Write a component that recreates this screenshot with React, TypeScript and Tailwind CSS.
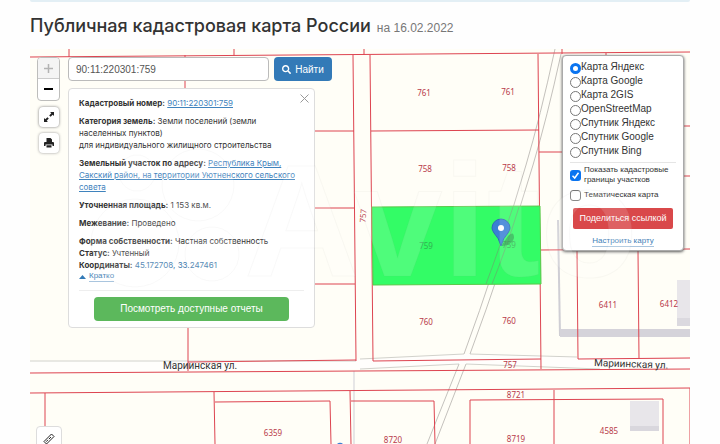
import { FaSearch, FaPrint } from "react-icons/fa";

const LINE = "#dd4450";

const layers = [
  "Карта Яндекс",
  "Карта Google",
  "Карта 2GIS",
  "OpenStreetMap",
  "Спутник Яндекс",
  "Спутник Google",
  "Спутник Bing",
];

// cadastral borders, as x1 y1 x2 y2
const borders = [
  [30, 57, 690, 52],
  [69, 49, 69, 57],
  [234, 49, 234, 56],
  [364, 49, 364, 55],
  [562, 49, 562, 54],
  [606, 53, 606, 58],
  [185, 55, 185, 95],
  [353, 55, 356, 361],
  [370, 55, 373, 361],
  [538, 54, 541, 369],
  [188, 320, 188, 371],
  [310, 131, 354, 131],
  [310, 208, 355, 208],
  [310, 284, 355, 284],
  [371, 131, 539, 130],
  [373, 361, 541, 359],
  [188, 362, 356, 360],
  [30, 373, 690, 369],
  [30, 393, 690, 388],
  [539, 152, 570, 152],
  [539, 250, 690, 249],
  [680, 126, 690, 126],
  [680, 176, 690, 176],
  [577, 250, 578, 359],
  [638, 250, 639, 359],
  [578, 359, 690, 358],
  [45, 393, 45, 444],
  [214, 392, 215, 444],
  [215, 402, 330, 401],
  [330, 401, 331, 444],
  [350, 391, 351, 444],
  [351, 401, 434, 401],
  [434, 401, 435, 444],
  [470, 400, 663, 399],
  [470, 400, 470, 444],
  [554, 390, 554, 444],
  [663, 399, 663, 444],
  [690, 388, 690, 444],
];

const plots = [
  { x: 424, y: 96, n: "761" },
  { x: 508, y: 95, n: "761" },
  { x: 425, y: 172, n: "758" },
  { x: 509, y: 171, n: "758" },
  { x: 426, y: 325, n: "760" },
  { x: 509, y: 324, n: "760" },
  { x: 510, y: 368, n: "757" },
  { x: 608, y: 308, n: "6411" },
  { x: 669, y: 307, n: "6412" },
  { x: 516, y: 398, n: "8721" },
  { x: 273, y: 436, n: "6359" },
  { x: 393, y: 443, n: "8720" },
  { x: 516, y: 442, n: "8719" },
  { x: 609, y: 434, n: "4585" },
];

function MapCanvas() {
  return (
    <svg
      className="absolute inset-0 h-full w-full"
      viewBox="30 49 660 395"
      preserveAspectRatio="xMidYMin slice"
      aria-hidden="true"
    >
      <rect x="30" y="49" width="660" height="395" fill="#fffef7" />
      {/* roads */}
      <path
        d="M30 361 L370 359 L464 354 L470 354 L577 357 L690 358 V369 L560 367 L466 364 L370 369 L30 373Z"
        fill="#fffefc"
      />
      <path d="M30 361H356M360 359L464 354M470 354L577 357M360 369L459 364M466 364L600 369" stroke="#d2d2cc" fill="none" />
      <path d="M354 371V444" stroke="#cfcfd6" strokeWidth="1" />
      <path
        d="M555 49Q540 118 526 165Q495 270 464 354M561 54Q547 118 533 165Q502 268 470 354M459 364L427 444M466 364L435 444"
        stroke="#c4c1bc"
        fill="none"
      />
      {/* buildings */}
      <path d="M558 220L560 336" stroke="#cfced4" strokeWidth="2" />
      <rect x="560" y="329" width="130" height="8" fill="#d5d3da" />
      <rect x="677" y="280" width="13" height="46" fill="#e8e6ea" />
      <rect x="677" y="318" width="13" height="8" fill="#dbd9df" />
      <rect x="630" y="401" width="29" height="30" fill="#e8e6ea" />
      <rect x="630" y="426" width="29" height="5" fill="#d9d7dd" />
      <g stroke={LINE} strokeWidth="1">
        {borders.map(([x1, y1, x2, y2]) => (
          <line key={`${x1}-${y1}-${x2}-${y2}`} x1={x1} y1={y1} x2={x2} y2={y2} />
        ))}
      </g>
      <g fill="#b83a4a" fontSize="8" textAnchor="middle" className="font-['Noto_Sans',sans-serif]">
        {plots.map((p) => (
          <text key={`${p.x}-${p.y}`} x={p.x} y={p.y}>
            {p.n}
          </text>
        ))}
        <text transform="translate(366 216) rotate(-86)">757</text>
      </g>
      <path d="M372 207L540 206L541 284L373 285Z" fill="#33fc66" stroke="#5cc84a" />
      <path d="M513 207Q498 252 486 284M519 207Q505 252 492 284" stroke="#56c46a" fill="none" />
      <g fill="#30b350" fontSize="8" textAnchor="middle" className="font-['Noto_Sans',sans-serif]">
        <text x="426" y="249">759</text>
        <text x="509" y="248">759</text>
      </g>
      <g fill="#333" fontSize="10" className="font-['Roboto',sans-serif]">
        <text x="163" y="369">Мариинская ул.</text>
        <text x="594" y="366" transform="rotate(2 594 366)">Мариинская ул.</text>
      </g>
      {/* marker */}
      <path d="M502 245L508 236Q514 230 514 238Q512 245 502 246Z" fill="#1f7a3c" opacity=".5" />
      <path
        d="M501 246Q499 238 494 233Q492 230 492 228A9 9 0 0 1 510 228Q510 230 508 233Q503 238 501 246Z"
        fill="#3a7fd5"
        stroke="#2f69b8"
      />
      <circle cx="501" cy="228" r="3" fill="#fff" />
      <path d="M337 444A4 4 0 0 1 343 444Z" fill="#3a7fd5" />
    </svg>
  );
}

function Watermark() {
  return (
    <svg
      className="pointer-events-none absolute inset-0 h-full w-full"
      viewBox="30 49 660 395"
      preserveAspectRatio="xMidYMin slice"
      aria-hidden="true"
    >
      <g fill="#fff" fillOpacity=".14" stroke="#888" strokeOpacity=".05">
        <circle cx="135" cy="243" r="44" />
        <circle cx="198" cy="185" r="36" />
        <circle cx="137" cy="173" r="18" />
        <circle cx="212" cy="254" r="27" />
        <text x="244" y="276" fontSize="160" fontWeight="700" className="font-['Liberation_Sans',sans-serif]">
          Avito
        </text>
      </g>
    </svg>
  );
}

function SideControls() {
  return (
    <div className="flex w-[23px] shrink-0 flex-col items-center gap-1.5">
      <div className="flex w-full flex-col overflow-hidden rounded-sm border border-[#bdbdbb] bg-white">
        <button type="button" aria-label="Приблизить" className="flex h-[21px] items-center justify-center border-b border-[#ccc] bg-[#f4f4f4]">
          <svg width="9" height="9" viewBox="0 0 9 9" stroke="#b3b3b3" strokeWidth="1.500">
            <path d="M4.500 0V9M0 4.500H9" />
          </svg>
        </button>
        <button type="button" aria-label="Отдалить" className="flex h-[21px] items-center justify-center">
          <svg width="9" height="9" viewBox="0 0 9 9" stroke="#000" strokeWidth="2">
            <path d="M0 4H9" />
          </svg>
        </button>
      </div>
      <button type="button" aria-label="На весь экран" className="flex size-5 items-center justify-center rounded-sm bg-white shadow-[0_0_3px_#777]">
        <svg width="10" height="10" viewBox="0 0 10 10" fill="#222">
          <path d="M6 0H10V4L8.700 2.700L6.600 4.800L5.200 3.400L7.300 1.300ZM4 10H0V6L1.300 7.300L3.400 5.200L4.800 6.600L2.700 8.700Z" />
        </svg>
      </button>
      <button type="button" aria-label="Печать" className="flex size-5 items-center justify-center rounded-sm bg-white text-[#222] shadow-[0_0_3px_#999]">
        <svg width="10" height="10" viewBox="0 0 10 10" fill="currentColor">
          <path d="M2.500 0H6.500L8 1.500V4H2.500ZM1 4H9Q10 4 10 5V8H8.500V6.500H1.500V8H0V5Q0 4 1 4ZM2.500 7.300H7.500V9.500H2.500Z" />
        </svg>
      </button>
    </div>
  );
}

function ParcelCard() {
  const link = "text-[#3f83bd] underline";
  return (
    <section className="relative flex w-[247px] flex-col gap-[6px] rounded-sm border border-[#ddd] bg-white px-[10px] pt-[8px] pb-[6px] font-['Inter',sans-serif] text-[8px] leading-[12px] text-[#333]">
      <button type="button" aria-label="Закрыть" className="absolute top-[5px] right-[5px]">
        <svg width="9" height="9" viewBox="0 0 9 9" stroke="#999">
          <path d="M.5 .5L8.500 8.500M8.500 .5L.5 8.500" />
        </svg>
      </button>
      <p>
        <b>Кадастровый номер:</b>{" "}
        <a href="#parcel" className={link}>90:11:220301:759</a>
      </p>
      <p>
        <b>Категория земель:</b> Земли поселений (земли
        <br />
        населенных пунктов)
        <br />
        для индивидуального жилищного строительства
      </p>
      <p className="whitespace-nowrap">
        <b>Земельный участок по адресу:</b>{" "}
        <a href="#address" className={link}>
          Республика Крым,
          <br />
          Сакский район, на территории Уютненского сельского
          <br />
          совета
        </a>
      </p>
      <p>
        <b>Уточненная площадь:</b> 1 153 кв.м.
      </p>
      <p>
        <b>Межевание:</b> Проведено
      </p>
      <div>
        <p>
          <b>Форма собственности:</b> Частная собственность
        </p>
        <p>
          <b>Статус:</b> Учтенный
        </p>
        <p>
          <b>Координаты:</b> <span className="text-[#4179ab]">45.172708, 33.247461</span>
        </p>
        <a href="#short" className="flex items-center gap-[3px] font-['Liberation_Sans',Arial,sans-serif] text-[8px] text-[#4b86b8]">
          <svg width="7" height="4" viewBox="0 0 7 4" fill="#337ab7">
            <path d="M3.500 0L7 4H0Z" />
          </svg>
          <span className="border-b border-[#a9c5de] leading-[10px]">Кратко</span>
        </a>
      </div>
      <hr className="mt-0.5 border-[#eee]" />
      <button type="button" className="mx-[15px] h-6 rounded-sm bg-[#5cb85c] font-['Liberation_Sans',Arial,sans-serif] text-[10px] text-white">
        Посмотреть доступные отчеты
      </button>
    </section>
  );
}

function LayersPanel() {
  return (
    <aside className="flex w-[122px] shrink-0 flex-col rounded-sm border border-[#aaa] bg-white px-[7px] pt-1 pb-[3px] text-[#333] shadow-[0_1px_3px_#555]">
      {layers.map((name, i) => (
        <label key={name} className="flex h-[14px] items-center text-[10px] leading-[14px] whitespace-nowrap">
          <input
            type="radio"
            name="layer"
            defaultChecked={i === 0}
            className="mt-[2px] size-[11px] shrink-0 appearance-none rounded-full border border-[#777] bg-white checked:border-[3px] checked:border-[#0a74f0]"
          />
          {name}
        </label>
      ))}
      <hr className="mt-1 border-[#e5e5e5]" />
      <label className="mt-0.5 flex items-center gap-[3px] text-[8px] leading-[10px]">
        <span className="relative flex size-[11px] shrink-0">
          <input type="checkbox" defaultChecked className="size-[11px] appearance-none rounded-[3px] bg-[#0a74f0]" />
          <svg className="pointer-events-none absolute inset-0" width="11" height="11" viewBox="0 0 11 11" fill="none" stroke="#fff" strokeWidth="1.500">
            <path d="M2.500 5.800L4.700 8L8.500 2.800" />
          </svg>
        </span>
        <span>
          Показать кадастровые
          <br />
          границы участков
        </span>
      </label>
      <label className="mt-1 flex items-center gap-[3px] text-[8px] leading-[12px]">
        <input type="checkbox" className="size-[11px] shrink-0 appearance-none rounded-[3px] border border-[#777] bg-white" />
        Тематическая карта
      </label>
      <button type="button" className="mx-[3px] mt-[7px] h-[21px] rounded-xs bg-[#d9484a] text-[9px] whitespace-nowrap text-white">
        Поделиться ссылкой
      </button>
      <a href="#settings" className="mt-[7px] self-center border-b border-[#a9c5de] text-[8px] leading-[10px] text-[#3f7fb8]">
        Настроить карту
      </a>
    </aside>
  );
}

export default function App() {
  return (
    <div className="flex min-h-screen flex-col bg-[#fefefe] px-[30px] font-['Liberation_Sans',Arial,sans-serif]">
      <div className="h-[2px] rounded-b-sm bg-[#e3eff5]" />
      <h1 className="mt-3 mb-[11px] flex h-6 items-baseline gap-[6px] font-['Inter',sans-serif] text-[18px] leading-6 font-medium whitespace-nowrap text-[#333]">
        Публичная кадастровая карта России
        <small className="font-['Liberation_Sans',Arial,sans-serif] text-[12px] font-normal text-[#777]">на 16.02.2022</small>
      </h1>
      <main className="relative flex flex-1 flex-col overflow-hidden">
        <MapCanvas />
        <div className="relative flex items-start justify-between pt-1.5 pr-[6px] pl-[7px]">
          <div className="flex items-start gap-2 pt-0.5">
            <SideControls />
            <div className="flex flex-col gap-[7px]">
              <form className="flex gap-[5px]">
                <input
                  type="text"
                  aria-label="Кадастровый номер"
                  defaultValue="90:11:220301:759"
                  className="h-6 w-[201px] rounded-sm border border-[#bbb] bg-white px-[7px] text-[10px] text-[#555]"
                />
                <button type="button" className="flex h-6 w-[58px] items-center justify-center gap-1 rounded-sm bg-[#337ab7] text-[10px] text-white">
                  <FaSearch size={9} />
                  Найти
                </button>
              </form>
              <ParcelCard />
            </div>
          </div>
          <LayersPanel />
        </div>
        <button type="button" aria-label="Линейка" className="absolute top-[377px] left-[6px] flex size-[26px] items-center justify-center rounded-sm border border-[#ddd] bg-white">
          <svg width="12" height="12" viewBox="0 0 12 12" fill="none" stroke="#222">
            <path d="M1 8.500L8.500 1L11 3.500L3.500 11ZM3.200 8.700L5 6.800M6 6L8 4" />
          </svg>
        </button>
        <Watermark />
      </main>
    </div>
  );
}
